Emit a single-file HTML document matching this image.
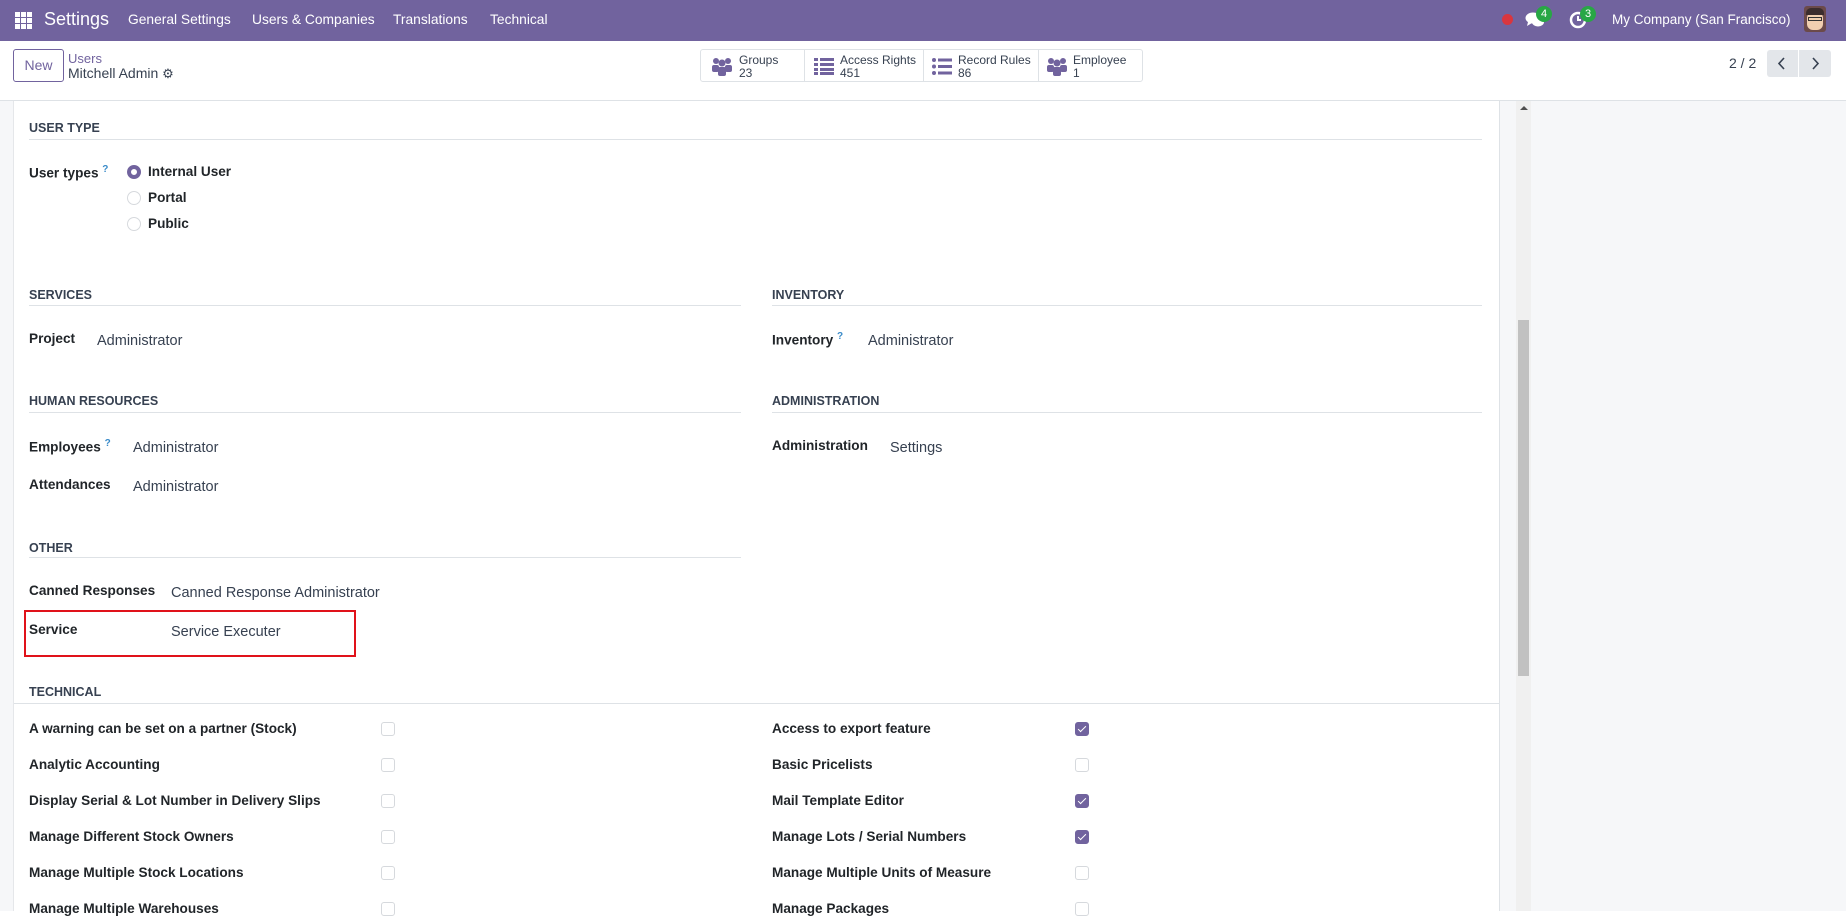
<!DOCTYPE html>
<html><head><meta charset="utf-8"><style>
*{margin:0;padding:0;box-sizing:border-box}
body{width:1846px;height:911px;overflow:hidden;background:#fff;font-family:"Liberation Sans",sans-serif;color:#374151;font-size:14.5px;position:relative}
.a{position:absolute;white-space:nowrap}
.nav{position:absolute;left:0;top:0;width:1846px;height:41px;background:#71639e;color:#fff}
.nav .a{font-size:13.8px;top:12px}
.b{font-weight:bold;color:#212529;font-size:13.6px}
.h{font-weight:bold;font-size:12.5px;color:#374151}
.ln{position:absolute;height:1px;background:#dee2e6}
.v{color:#374151}
.q{color:#3a8bc9;font-size:10px;font-weight:bold;vertical-align:super}
.cb{position:absolute;width:14px;height:14px;border:1px solid #d6d9dd;border-radius:3px;background:#fff}
.cb.on{background:#71639e;border-color:#71639e}
.cb.on:after{content:"";position:absolute;left:4px;top:1px;width:3px;height:7px;border:solid #fff;border-width:0 1.5px 1.5px 0;transform:rotate(45deg)}
.rd{position:absolute;width:14px;height:14px;border:1px solid #d6d9dd;border-radius:50%}
.rd.on{border:4px solid #71639e}
.stat .a{font-size:12px;color:#374151;line-height:13px}
</style></head><body>
<div class="nav">
 <svg class="a" style="left:15px;top:12px" width="17" height="17" viewBox="0 0 17 17" fill="#fff"><rect x="0" y="0" width="5" height="5"/><rect x="6" y="0" width="5" height="5"/><rect x="12" y="0" width="5" height="5"/><rect x="0" y="6" width="5" height="5"/><rect x="6" y="6" width="5" height="5"/><rect x="12" y="6" width="5" height="5"/><rect x="0" y="12" width="5" height="5"/><rect x="6" y="12" width="5" height="5"/><rect x="12" y="12" width="5" height="5"/></svg>
 <div class="a" style="left:44px;top:9px;font-size:18px">Settings</div>
 <div class="a" style="left:128px">General Settings</div>
 <div class="a" style="left:252px">Users &amp; Companies</div>
 <div class="a" style="left:393px">Translations</div>
 <div class="a" style="left:490px">Technical</div>
 <div class="a" style="left:1502px;top:14px;width:11px;height:11px;border-radius:50%;background:#d9363e"></div>
 <svg class="a" style="left:1525px;top:11px" width="20" height="18" viewBox="0 0 20 18" fill="#fff"><ellipse cx="8" cy="7" rx="7.5" ry="5.5"/><path d="M3 11 L2 15 L7 12Z"/><ellipse cx="13" cy="11" rx="6" ry="4.5"/></svg>
 <div class="a" style="left:1536px;top:6px;width:16px;height:16px;border-radius:50%;background:#28a745;font-size:11px;text-align:center;line-height:16px">4</div>
 <svg class="a" style="left:1569px;top:11px" width="18" height="18" viewBox="0 0 18 18"><circle cx="9" cy="9" r="7" fill="none" stroke="#fff" stroke-width="2.5"/><path d="M9 5V9H12" stroke="#fff" stroke-width="2" fill="none"/></svg>
 <div class="a" style="left:1580px;top:6px;width:16px;height:16px;border-radius:50%;background:#28a745;font-size:11px;text-align:center;line-height:16px">3</div>
 <div class="a" style="left:1612px;font-size:13.5px">My Company (San Francisco)</div>
 <div class="a" style="left:1804px;top:6px;width:22px;height:26px;border-radius:3px;background:#6b4a4a;overflow:hidden"><div style="position:absolute;left:3px;top:6px;width:16px;height:18px;background:#f1cfb0;border-radius:6px"></div><div style="position:absolute;left:2px;top:2px;width:18px;height:7px;background:#3b2d2d;border-radius:5px 5px 0 0"></div><div style="position:absolute;left:4px;top:11px;width:14px;height:4px;border:1.5px solid #333"></div></div>
</div>
<!-- control panel -->
<div class="a" style="left:13px;top:49px;width:51px;height:33px;border:1px solid #71639e;border-radius:3px;color:#71639e;font-size:14px;text-align:center;line-height:31px">New</div>
<div class="a" style="left:68px;top:51px;font-size:13px;color:#71639e">Users</div>
<div class="a" style="left:68px;top:65px;font-size:14px;color:#374151">Mitchell Admin <span style="font-size:13px">⚙</span></div>
<div class="a stat" style="left:700px;top:49px;width:443px;height:33px;border:1px solid #dee2e6;border-radius:3px">
 <div class="a" style="left:103px;top:0;width:1px;height:31px;background:#dee2e6"></div>
 <div class="a" style="left:222px;top:0;width:1px;height:31px;background:#dee2e6"></div>
 <div class="a" style="left:337px;top:0;width:1px;height:31px;background:#dee2e6"></div>
 <svg class="a" style="left:10px;top:7px" width="22" height="20" viewBox="0 0 22 20" fill="#71639e"><circle cx="5" cy="4" r="3"/><circle cx="17" cy="4" r="3"/><circle cx="11" cy="6" r="3.5"/><rect x="1" y="8" width="7" height="7" rx="2"/><rect x="14" y="8" width="7" height="7" rx="2"/><rect x="7" y="10" width="8" height="9" rx="2"/></svg>
 <div class="a" style="left:38px;top:4px">Groups<br>23</div>
 <svg class="a" style="left:113px;top:8px" width="20" height="17" viewBox="0 0 20 17" fill="#71639e"><rect x="0" y="0" width="4" height="3"/><rect x="6" y="0" width="14" height="3"/><rect x="0" y="5" width="4" height="3"/><rect x="6" y="5" width="14" height="3"/><rect x="0" y="10" width="4" height="3"/><rect x="6" y="10" width="14" height="3"/><rect x="0" y="14" width="4" height="3"/><rect x="6" y="14" width="14" height="3"/></svg>
 <div class="a" style="left:139px;top:4px">Access Rights<br>451</div>
 <svg class="a" style="left:231px;top:8px" width="20" height="17" viewBox="0 0 20 17" fill="#71639e"><circle cx="2" cy="2" r="2"/><rect x="6" y="0.5" width="14" height="3"/><circle cx="2" cy="8.5" r="2"/><rect x="6" y="7" width="14" height="3"/><circle cx="2" cy="15" r="2"/><rect x="6" y="13.5" width="14" height="3"/></svg>
 <div class="a" style="left:257px;top:4px">Record Rules<br>86</div>
 <svg class="a" style="left:345px;top:7px" width="22" height="20" viewBox="0 0 22 20" fill="#71639e"><circle cx="5" cy="4" r="3"/><circle cx="17" cy="4" r="3"/><circle cx="11" cy="6" r="3.5"/><rect x="1" y="8" width="7" height="7" rx="2"/><rect x="14" y="8" width="7" height="7" rx="2"/><rect x="7" y="10" width="8" height="9" rx="2"/></svg>
 <div class="a" style="left:372px;top:4px">Employee<br>1</div>
</div>
<div class="a" style="left:1729px;top:55px;font-size:14px">2 / 2</div>
<div class="a" style="left:1767px;top:50px;width:64px;height:27px;background:#e3e6ea;border-radius:3px"><div class="a" style="left:31px;top:0;width:1px;height:27px;background:#fff"></div>
<svg class="a" style="left:10px;top:7px" width="10" height="13" viewBox="0 0 10 13"><path d="M7 1L2 6.5L7 12" stroke="#374151" stroke-width="1.6" fill="none"/></svg>
<svg class="a" style="left:43px;top:7px" width="10" height="13" viewBox="0 0 10 13"><path d="M3 1L8 6.5L3 12" stroke="#374151" stroke-width="1.6" fill="none"/></svg></div>
<div class="ln" style="left:0;top:100px;width:1846px"></div>
<div class="a" style="left:0;top:101px;width:14px;height:810px;background:#f6f7f9;border-right:1px solid #e5e7ea"></div>
<div class="a" style="left:1499px;top:101px;width:347px;height:810px;background:#f6f7f9;border-left:1px solid #dee2e6"></div>
<div class="a" style="left:1516px;top:101px;width:15px;height:810px;background:#f0f0f0"></div>
<div class="a" style="left:1518px;top:320px;width:11px;height:356px;background:#c1c1c1"></div>
<div class="a" style="left:1520px;top:106px;width:0;height:0;border-left:4px solid transparent;border-right:4px solid transparent;border-bottom:4px solid #505050"></div>
<div class="a h" style="left:29px;top:121px">USER TYPE</div>
<div class="ln" style="left:29px;top:139px;width:1453px"></div>
<div class="a b" style="left:29px;top:164px">User types <span class="q">?</span></div>
<div class="rd on" style="left:127px;top:165px"></div><div class="a b" style="left:148px;top:164px">Internal User</div>
<div class="rd" style="left:127px;top:191px"></div><div class="a b" style="left:148px;top:190px">Portal</div>
<div class="rd" style="left:127px;top:217px"></div><div class="a b" style="left:148px;top:216px">Public</div>
<div class="a h" style="left:29px;top:288px">SERVICES</div>
<div class="ln" style="left:29px;top:305px;width:712px"></div>
<div class="a h" style="left:772px;top:288px">INVENTORY</div>
<div class="ln" style="left:772px;top:305px;width:710px"></div>
<div class="a b" style="left:29px;top:331px">Project</div><div class="a v" style="left:97px;top:333px">Administrator</div>
<div class="a b" style="left:772px;top:331px">Inventory <span class="q">?</span></div><div class="a v" style="left:868px;top:333px">Administrator</div>
<div class="a h" style="left:29px;top:394px">HUMAN RESOURCES</div>
<div class="ln" style="left:29px;top:412px;width:712px"></div>
<div class="a h" style="left:772px;top:394px">ADMINISTRATION</div>
<div class="ln" style="left:772px;top:412px;width:710px"></div>
<div class="a b" style="left:29px;top:438px">Employees <span class="q">?</span></div><div class="a v" style="left:133px;top:440px">Administrator</div>
<div class="a b" style="left:772px;top:438px">Administration</div><div class="a v" style="left:890px;top:440px">Settings</div>
<div class="a b" style="left:29px;top:477px">Attendances</div><div class="a v" style="left:133px;top:479px">Administrator</div>
<div class="a h" style="left:29px;top:541px">OTHER</div>
<div class="ln" style="left:29px;top:557px;width:712px"></div>
<div class="a b" style="left:29px;top:583px">Canned Responses</div><div class="a v" style="left:171px;top:585px">Canned Response Administrator</div>
<div class="a b" style="left:29px;top:622px">Service</div><div class="a v" style="left:171px;top:624px">Service Executer</div>
<div class="a" style="left:24px;top:610px;width:332px;height:47px;border:2px solid #e0121a"></div>
<div class="a h" style="left:29px;top:685px">TECHNICAL</div>
<div class="ln" style="left:14px;top:703px;width:1485px"></div>
<div class="a b" style="left:29px;top:721px">A warning can be set on a partner (Stock)</div><div class="cb" style="left:381px;top:722px"></div>
<div class="a b" style="left:29px;top:757px">Analytic Accounting</div><div class="cb" style="left:381px;top:758px"></div>
<div class="a b" style="left:29px;top:793px">Display Serial &amp; Lot Number in Delivery Slips</div><div class="cb" style="left:381px;top:794px"></div>
<div class="a b" style="left:29px;top:829px">Manage Different Stock Owners</div><div class="cb" style="left:381px;top:830px"></div>
<div class="a b" style="left:29px;top:865px">Manage Multiple Stock Locations</div><div class="cb" style="left:381px;top:866px"></div>
<div class="a b" style="left:29px;top:901px">Manage Multiple Warehouses</div><div class="cb" style="left:381px;top:902px"></div>
<div class="a b" style="left:772px;top:721px">Access to export feature</div><div class="cb on" style="left:1075px;top:722px"></div>
<div class="a b" style="left:772px;top:757px">Basic Pricelists</div><div class="cb" style="left:1075px;top:758px"></div>
<div class="a b" style="left:772px;top:793px">Mail Template Editor</div><div class="cb on" style="left:1075px;top:794px"></div>
<div class="a b" style="left:772px;top:829px">Manage Lots / Serial Numbers</div><div class="cb on" style="left:1075px;top:830px"></div>
<div class="a b" style="left:772px;top:865px">Manage Multiple Units of Measure</div><div class="cb" style="left:1075px;top:866px"></div>
<div class="a b" style="left:772px;top:901px">Manage Packages</div><div class="cb" style="left:1075px;top:902px"></div>
</body></html>
